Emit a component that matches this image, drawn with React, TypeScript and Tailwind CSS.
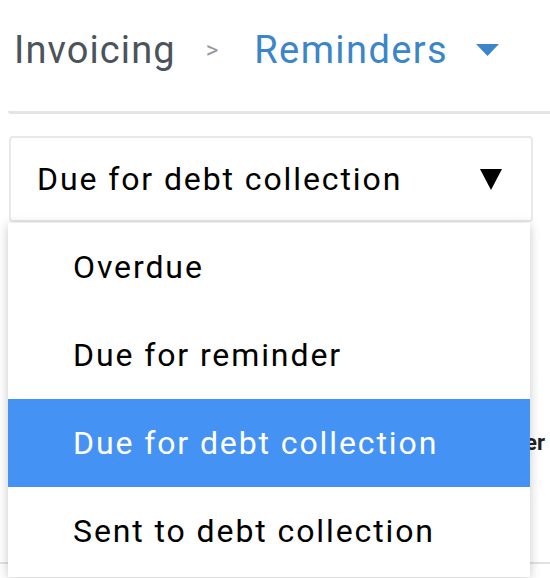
import React from "react";

const options = [
  "Overdue",
  "Due for reminder",
  "Due for debt collection",
  "Sent to debt collection",
];

export default function App() {
  const selected = "Due for debt collection";

  return (
    <main
      className="relative h-[578px] w-[550px] overflow-hidden bg-white"
      style={{ fontFamily: "Roboto, 'Liberation Sans', sans-serif" }}
    >
      <header className="flex h-[98px] items-center pl-[14px] pt-[2px]">
        <span className="text-[38px] leading-none tracking-[1.1px] text-[#4b535b]">Invoicing</span>
        <span className="ml-[30px] text-[24px] leading-none text-[#9a9a9a]">&gt;</span>
        <span className="ml-[36px] text-[38px] leading-none tracking-[1.4px] text-[#3b86c8]">
          Reminders
        </span>
        <svg className="ml-[28px]" width="23" height="12" viewBox="0 0 23 12">
          <path d="M0 0 L23 0 L11.5 12 Z" fill="#3b86c8" />
        </svg>
      </header>

      <div className="ml-[8px] h-[16px] rounded-bl-[3px] border-b-[3px] border-[#e4e4e4]" />

      <div className="ml-[9px] mt-[22px] flex h-[86px] w-[524px] items-center justify-between rounded-[4px] border-2 border-[#e8e8e8] pl-[26px] pr-[29px]">
        <span className="text-[32px] tracking-[1.9px] text-black">{selected}</span>
        <svg width="22" height="21" viewBox="0 0 22 21">
          <path d="M0 0 L22 0 L11 21 Z" fill="#000" />
        </svg>
      </div>

      <div className="mt-[200px] flex h-[40px] items-center justify-end pr-[5px]">
        <span className="text-[22px] font-bold text-[#222]">Customer</span>
      </div>
      <div className="mt-[100px] border-b-2 border-[#e2e2e2]" />

      <ul className="absolute left-[8px] top-[223px] w-[522px] bg-white pb-[2px] shadow-[0_2px_10px_rgba(0,0,0,0.22)]">
        {options.map((opt) => (
          <li
            key={opt}
            className={
              opt === selected
                ? "flex h-[88px] items-center bg-[#4592f5] pl-[65px] text-[32px] tracking-[1.9px] text-white"
                : "flex h-[88px] items-center pl-[65px] text-[32px] tracking-[1.9px] text-black"
            }
          >
            {opt}
          </li>
        ))}
      </ul>
    </main>
  );
}
